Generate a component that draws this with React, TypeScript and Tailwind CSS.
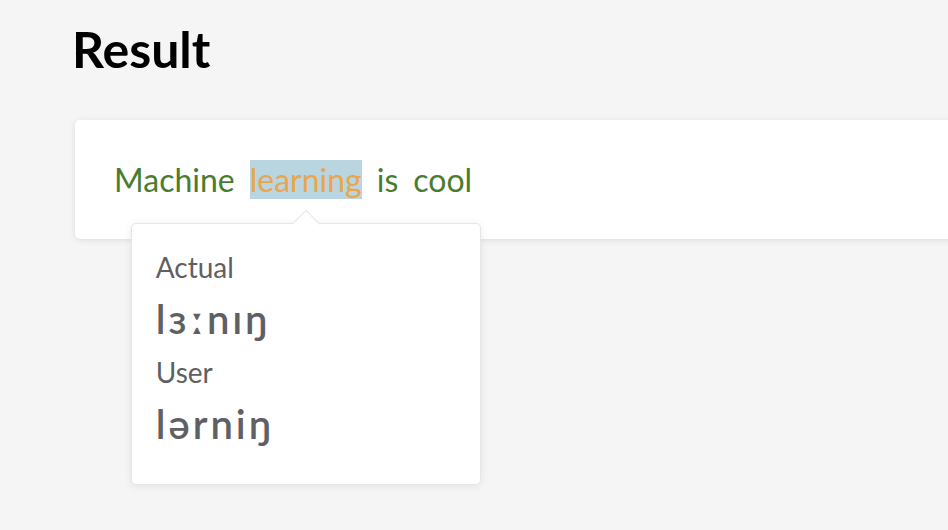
import React from 'react';

const words = [
  { text: 'Machine', wrong: false },
  { text: 'learning', wrong: true },
  { text: 'is', wrong: false },
  { text: 'cool', wrong: false },
];

const App: React.FC = () => {
  return (
    <div
      className="h-[530px] w-full overflow-hidden bg-[#f5f5f5] pl-[75px] pt-[19px]"
      style={{ fontFamily: 'Lato, "Noto Sans", sans-serif' }}
    >
      <h1 className="-ml-[3px] text-[50px] font-bold leading-[60px] text-black">Result</h1>
      <div className="mt-[41px] w-[920px] rounded-[5px] bg-white px-[39px] py-[40px] shadow-[0_1px_6px_rgba(0,0,0,0.1)]">
        <div className="flex gap-[15px] text-[32px] leading-[39px] text-[#4a7c30]">
          {words.map((w) =>
            w.wrong ? (
              <span key={w.text} className="relative bg-[#b9d5e0] text-[#e9a64e]">
                {w.text}
                <div className="absolute left-1/2 top-[63px] w-[350px] -translate-x-1/2 rounded-[5px] border border-[#e6e6ea] bg-white px-6 pb-[36px] pt-[26px] text-[#5f6064] shadow-[0_1px_8px_rgba(0,0,0,0.08)]">
                  <div className="absolute -top-[11px] left-1/2 h-[20px] w-[20px] -translate-x-1/2 translate-y-[1px] rotate-45 border-l border-t border-[#e6e6ea] bg-white" />
                  <div className="text-[28px] leading-[34px]">Actual</div>
                  <div className="mt-[11px] text-[40px] font-semibold leading-[48px] tracking-[3px]">lɜːnɪŋ</div>
                  <div className="mt-[12px] text-[28px] leading-[34px]">User</div>
                  <div className="mt-[11px] text-[40px] font-semibold leading-[48px] tracking-[3px]">lərniŋ</div>
                </div>
              </span>
            ) : (
              <span key={w.text}>{w.text}</span>
            )
          )}
        </div>
      </div>
    </div>
  );
};

export default App;
